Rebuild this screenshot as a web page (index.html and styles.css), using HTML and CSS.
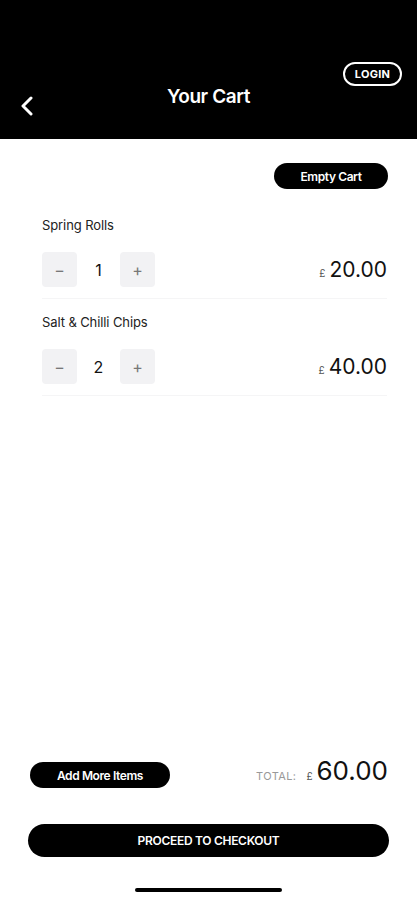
FILE: index.html
```html
<!DOCTYPE html>
<html>
<head>
  <title>Your Cart</title>
  <link rel="stylesheet" href="styles.css">
</head>
<body>
  <div class="page">
    <header class="header">
      <div class="header-top">
        <button class="login-btn">LOGIN</button>
      </div>
      <div class="header-main">
        <a class="back" href="#">
          <svg width="14" height="20" viewBox="0 0 14 20">
            <path d="M11 2 L3 10 L11 18" fill="none" stroke="#fff" stroke-width="3" stroke-linecap="round" stroke-linejoin="round"/>
          </svg>
        </a>
        <h1 class="title">Your Cart</h1>
        <span></span>
      </div>
    </header>

    <main class="content">
      <div class="actions">
        <button class="pill-btn">Empty Cart</button>
      </div>

      <div class="cart-item">
        <div class="item-name">Spring Rolls</div>
        <div class="item-row">
          <div class="qty">
            <button class="qty-btn">&minus;</button>
            <span class="qty-num">1</span>
            <button class="qty-btn">+</button>
          </div>
          <div class="price"><span class="currency">£</span>20.00</div>
        </div>
      </div>

      <div class="cart-item">
        <div class="item-name">Salt &amp; Chilli Chips</div>
        <div class="item-row">
          <div class="qty">
            <button class="qty-btn">&minus;</button>
            <span class="qty-num">2</span>
            <button class="qty-btn">+</button>
          </div>
          <div class="price"><span class="currency">£</span>40.00</div>
        </div>
      </div>
    </main>

    <footer class="footer">
      <div class="total-row">
        <button class="pill-btn add-btn">Add More Items</button>
        <div class="total">
          <span class="total-label">TOTAL:</span>
          <span class="currency">£</span>
          <span class="total-amount">60.00</span>
        </div>
      </div>
      <button class="checkout-btn">PROCEED TO CHECKOUT</button>
      <div class="home-bar"></div>
    </footer>
  </div>
</body>
</html>
```

FILE: styles.css
```css
body {
  margin: 0;
  padding: 0;
  background-color: #ffffff;
  font-family: Inter, 'Liberation Sans', sans-serif;
  color: #111111;
}

button {
  font-family: inherit;
  cursor: pointer;
}

.page {
  display: flex;
  flex-direction: column;
  min-height: 900px;
}

/* header */
.header {
  background-color: #000000;
  height: 139px;
  box-sizing: border-box;
  padding: 62px 15px 0 20px;
}

.header-top {
  display: flex;
  justify-content: flex-end;
}

.login-btn {
  width: 59px;
  height: 24px;
  background: transparent;
  border: 2px solid #ffffff;
  border-radius: 12px;
  color: #ffffff;
  font-size: 11px;
  font-weight: 700;
  letter-spacing: 0.3px;
  padding: 0;
}

.header-main {
  display: grid;
  grid-template-columns: 1fr auto 1fr;
  align-items: start;
  margin-top: -1px;
}

.back {
  display: block;
  margin-top: 11px;
  width: 14px;
}

.title {
  margin: 0;
  color: #ffffff;
  font-size: 19px;
  font-weight: 600;
  line-height: 24px;
  letter-spacing: -0.4px;
  margin-left: -5px;
}

/* content */
.content {
  flex: 1;
  padding: 24px 30px 0 42px;
}

.actions {
  display: flex;
  justify-content: flex-end;
  margin-right: -1px;
  margin-bottom: 28px;
}

.pill-btn {
  height: 26px;
  width: 114px;
  background-color: #000000;
  color: #ffffff;
  border: none;
  border-radius: 13px;
  font-size: 12px;
  font-weight: 600;
  letter-spacing: -0.4px;
  padding: 0;
}

.cart-item {
  border-bottom: 1px solid #f5f5f6;
  padding-bottom: 11px;
  margin-bottom: 15px;
}

.item-name {
  font-size: 13px;
  line-height: 16px;
  color: #222222;
  letter-spacing: -0.1px;
  margin-bottom: 19px;
}

.item-row {
  display: flex;
  align-items: center;
  justify-content: space-between;
}

.qty {
  display: flex;
  align-items: center;
}

.qty-btn {
  width: 35px;
  height: 35px;
  border: none;
  border-radius: 4px;
  background-color: #f2f2f4;
  color: #777777;
  font-size: 16px;
  padding: 0;
}

.qty-num {
  width: 43px;
  text-align: center;
  font-size: 16px;
  color: #111111;
}

.price {
  font-size: 21px;
  color: #111111;
  display: flex;
  align-items: baseline;
}

.currency {
  font-size: 10px;
  color: #555555;
  margin-right: 4px;
}

/* footer */
.footer {
  padding: 0 28px 8px 28px;
  display: flex;
  flex-direction: column;
}

.total-row {
  display: flex;
  align-items: center;
  justify-content: space-between;
  padding-left: 2px;
  padding-right: 1px;
  height: 26px;
}

.add-btn {
  width: 140px;
}

.total {
  display: flex;
  align-items: baseline;
  margin-top: -9px;
}

.total-label {
  font-size: 11px;
  color: #999999;
  letter-spacing: 0.4px;
  margin-right: 10px;
}

.total-amount {
  font-size: 26px;
  color: #111111;
}

.checkout-btn {
  margin-top: 36px;
  height: 33px;
  width: 100%;
  background-color: #000000;
  color: #ffffff;
  border: none;
  border-radius: 17px;
  font-size: 12px;
  font-weight: 600;
  letter-spacing: -0.3px;
  padding: 0;
}

.home-bar {
  align-self: center;
  width: 147px;
  height: 4px;
  border-radius: 2px;
  background-color: #000000;
  margin-top: 31px;
}
```
